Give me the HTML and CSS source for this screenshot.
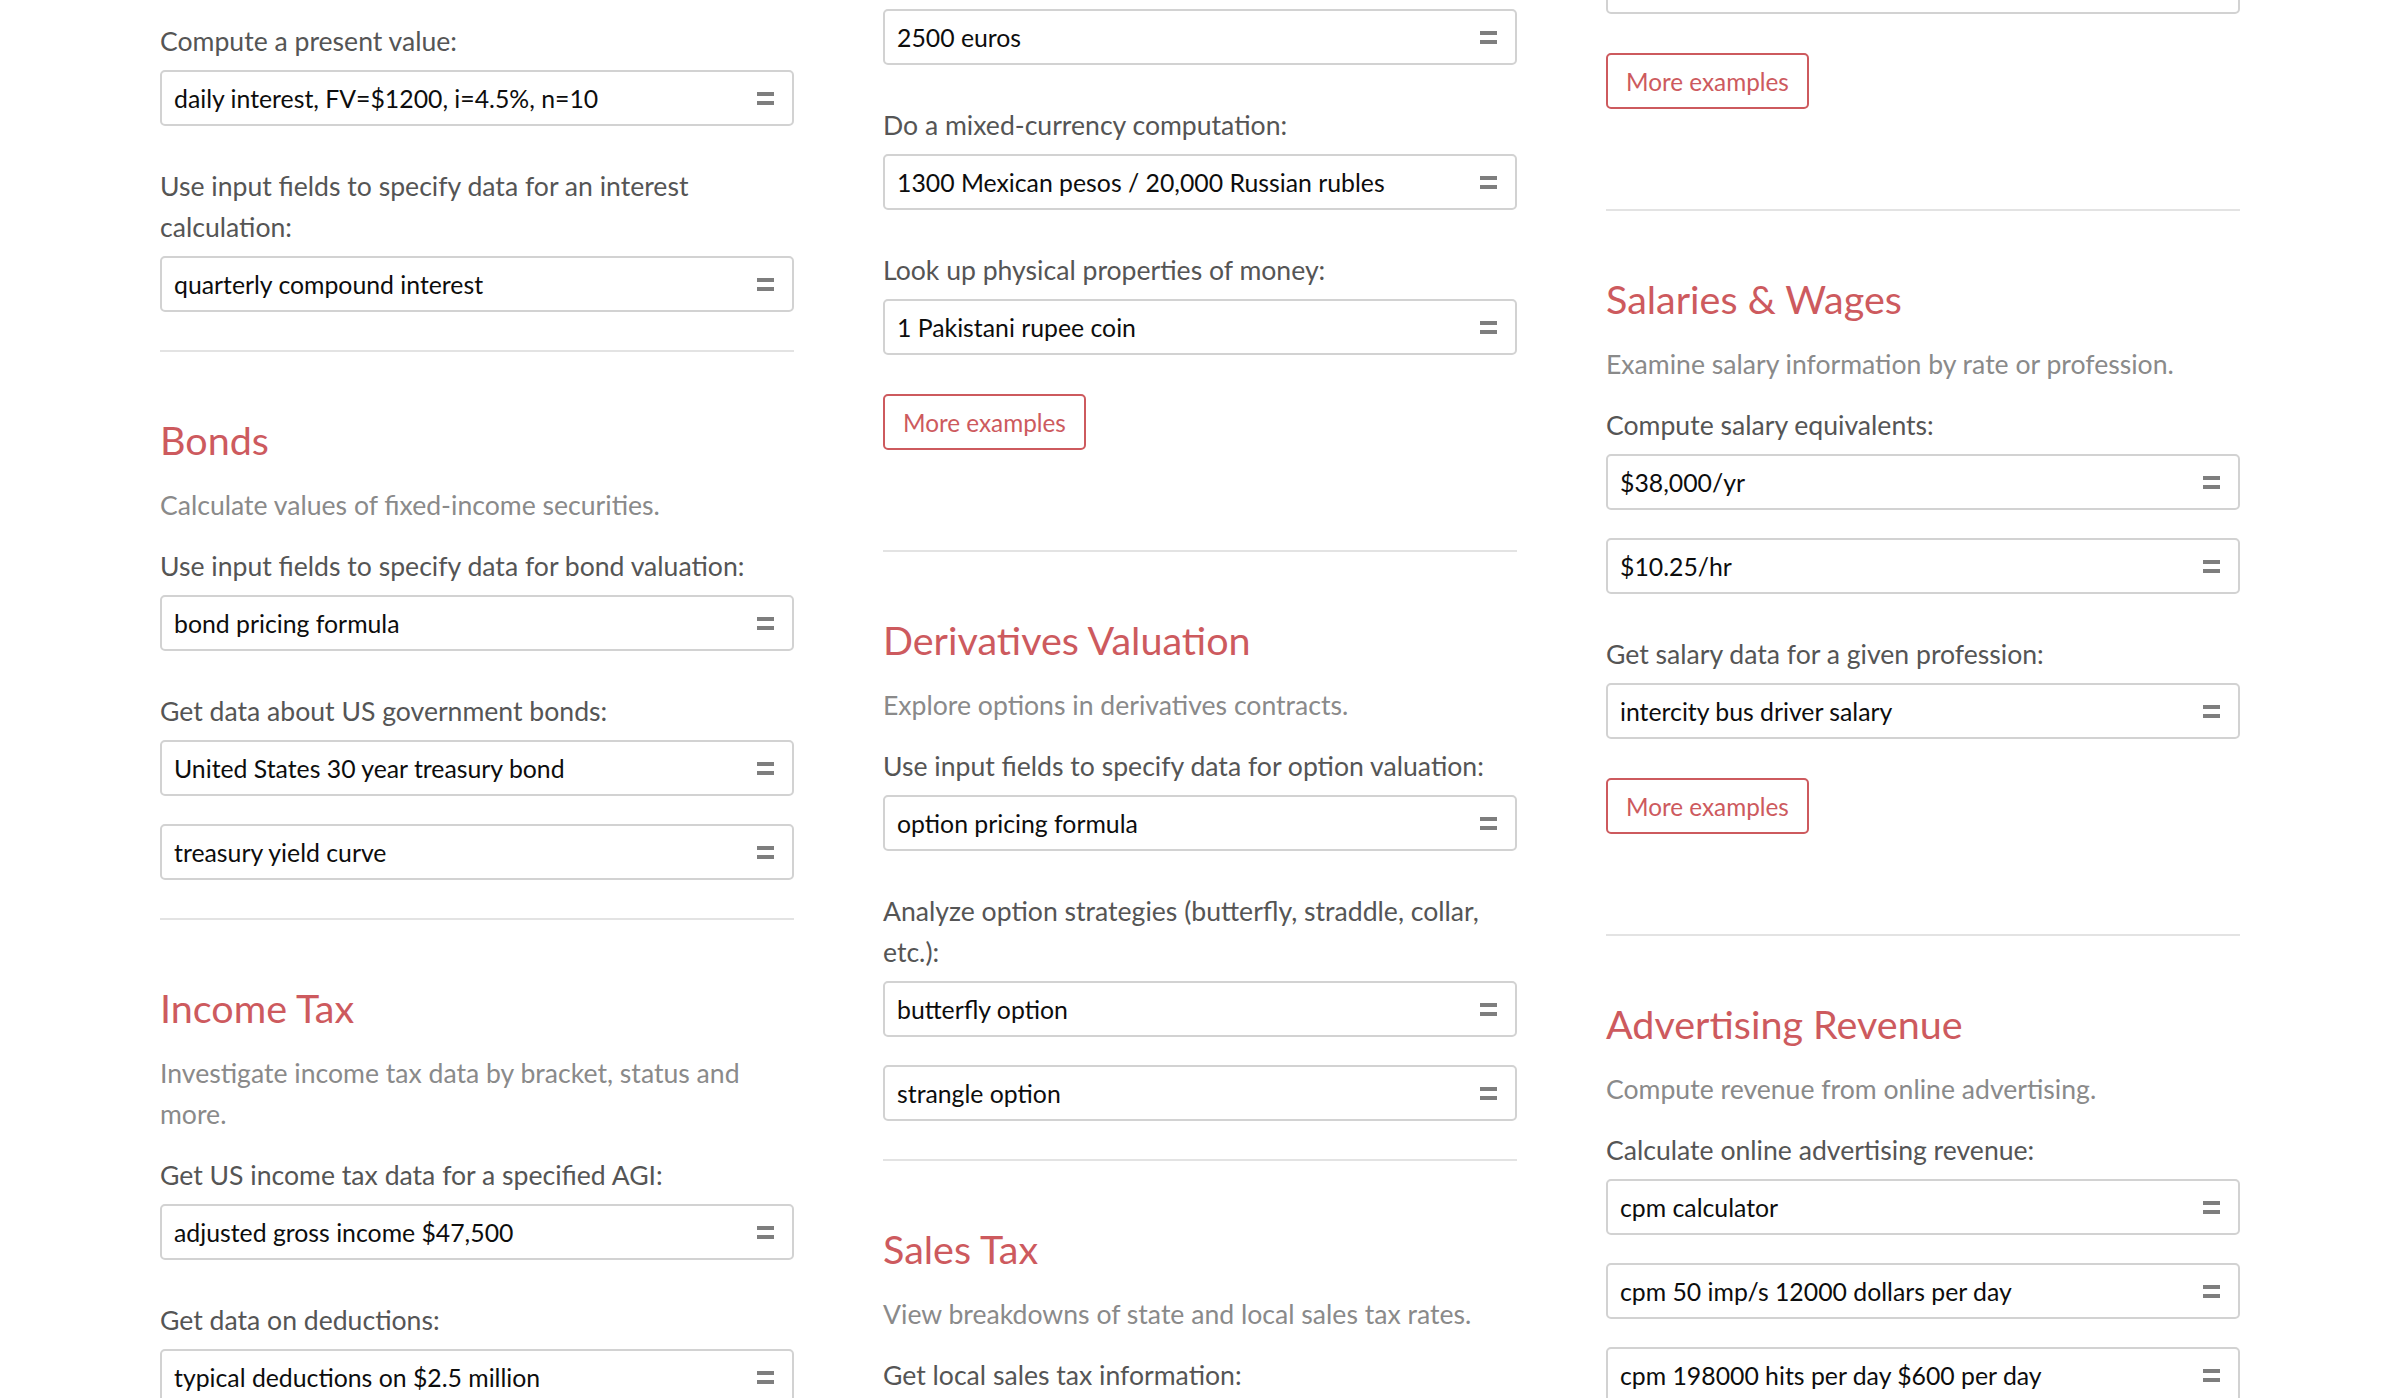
FILE: index.html
```html
<!DOCTYPE html>
<html lang="en">
<head>
<meta charset="utf-8">
<title>Money &amp; Finance examples</title>
<link rel="stylesheet" href="styles.css">
</head>
<body>
<main class="page">
  <div class="col col-left">
    <div class="group first">
      <p class="label">Compute a present value:</p>
      <div class="field"><span>daily interest, FV=$1200, i=4.5%, n=10</span><i class="eq"></i></div>
    </div>
    <div class="group">
      <p class="label">Use input fields to specify data for an interest calculation:</p>
      <div class="field"><span>quarterly compound interest</span><i class="eq"></i></div>
    </div>
    <hr class="divider">
    <section class="topic">
      <h2>Bonds</h2>
      <p class="desc">Calculate values of fixed-income securities.</p>
      <div class="group">
        <p class="label">Use input fields to specify data for bond valuation:</p>
        <div class="field"><span>bond pricing formula</span><i class="eq"></i></div>
      </div>
      <div class="group">
        <p class="label">Get data about US government bonds:</p>
        <div class="field"><span>United States 30 year treasury bond</span><i class="eq"></i></div>
        <div class="field"><span>treasury yield curve</span><i class="eq"></i></div>
      </div>
    </section>
    <hr class="divider">
    <section class="topic">
      <h2>Income Tax</h2>
      <p class="desc">Investigate income tax data by bracket, status and more.</p>
      <div class="group">
        <p class="label">Get US income tax data for a specified AGI:</p>
        <div class="field"><span>adjusted gross income $47,500</span><i class="eq"></i></div>
      </div>
      <div class="group">
        <p class="label">Get data on deductions:</p>
        <div class="field"><span>typical deductions on $2.5 million</span><i class="eq"></i></div>
      </div>
    </section>
  </div>

  <div class="col col-mid">
    <div class="group first">
      <div class="field"><span>2500 euros</span><i class="eq"></i></div>
    </div>
    <div class="group">
      <p class="label">Do a mixed-currency computation:</p>
      <div class="field"><span>1300 Mexican pesos / 20,000 Russian rubles</span><i class="eq"></i></div>
    </div>
    <div class="group">
      <p class="label">Look up physical properties of money:</p>
      <div class="field"><span>1 Pakistani rupee coin</span><i class="eq"></i></div>
    </div>
    <a class="more" href="#">More examples</a>
    <hr class="divider">
    <section class="topic">
      <h2>Derivatives Valuation</h2>
      <p class="desc">Explore options in derivatives contracts.</p>
      <div class="group">
        <p class="label">Use input fields to specify data for option valuation:</p>
        <div class="field"><span>option pricing formula</span><i class="eq"></i></div>
      </div>
      <div class="group">
        <p class="label">Analyze option strategies (butterfly, straddle, collar, etc.):</p>
        <div class="field"><span>butterfly option</span><i class="eq"></i></div>
        <div class="field"><span>strangle option</span><i class="eq"></i></div>
      </div>
    </section>
    <hr class="divider">
    <section class="topic">
      <h2>Sales Tax</h2>
      <p class="desc">View breakdowns of state and local sales tax rates.</p>
      <div class="group">
        <p class="label">Get local sales tax information:</p>
      </div>
    </section>
  </div>

  <div class="col col-right">
    <div class="group first">
      <div class="field"><span>inflation of $5,000 from 1987 to 2017</span><i class="eq"></i></div>
    </div>
    <a class="more" href="#">More examples</a>
    <hr class="divider">
    <section class="topic">
      <h2>Salaries &amp; Wages</h2>
      <p class="desc">Examine salary information by rate or profession.</p>
      <div class="group">
        <p class="label">Compute salary equivalents:</p>
        <div class="field"><span>$38,000/yr</span><i class="eq"></i></div>
        <div class="field"><span>$10.25/hr</span><i class="eq"></i></div>
      </div>
      <div class="group">
        <p class="label">Get salary data for a given profession:</p>
        <div class="field"><span>intercity bus driver salary</span><i class="eq"></i></div>
      </div>
      <a class="more" href="#">More examples</a>
    </section>
    <hr class="divider">
    <section class="topic">
      <h2>Advertising Revenue</h2>
      <p class="desc">Compute revenue from online advertising.</p>
      <div class="group">
        <p class="label">Calculate online advertising revenue:</p>
        <div class="field"><span>cpm calculator</span><i class="eq"></i></div>
        <div class="field"><span>cpm 50 imp/s 12000 dollars per day</span><i class="eq"></i></div>
        <div class="field"><span>cpm 198000 hits per day $600 per day</span><i class="eq"></i></div>
      </div>
    </section>
  </div>
</main>
</body>
</html>
```

FILE: styles.css
```css
html, body {
  margin: 0;
  padding: 0;
  background: #ffffff;
}

body {
  height: 1398px;
  overflow: hidden;
  font-family: Lato, "Open Sans", "Liberation Sans", sans-serif;
  font-size: 26.6px;
  line-height: 41px;
  color: #1b1b1b;
}

.page {
  display: grid;
  grid-template-columns: repeat(3, 634px);
  column-gap: 89px;
  padding: 0 160px 0 160px;
  align-items: start;
}

.col {
  display: flex;
  flex-direction: column;
  align-items: stretch;
}

.group {
  display: flex;
  flex-direction: column;
  gap: 28px;
  margin-top: 40px;
}

.topic > .group:first-of-type {
  margin-top: 0;
}

.col-left > .group.first { margin-top: 21px; }
.col-mid > .group.first { margin-top: 9px; }
.col-right > .group.first { margin-top: -42px; }

.label {
  margin: 0 0 -20px 0;
  color: #555555;
}

.field {
  box-sizing: border-box;
  height: 56px;
  border: 2px solid #d2d2d2;
  border-radius: 5px;
  padding: 0 18px 0 12px;
  display: flex;
  align-items: center;
  justify-content: space-between;
  color: #0d0d0d;
  background: #ffffff;
  font-size: 24.8px;
}

.field span {
  white-space: nowrap;
}

.eq {
  display: block;
  box-sizing: border-box;
  width: 17px;
  height: 13px;
  border-top: 4px solid #7e7e7e;
  border-bottom: 4px solid #7e7e7e;
  flex: none;
}

.divider {
  border: 0;
  height: 2px;
  background: #e3e3e3;
  margin: 38px 0 0 0;
  width: 100%;
}

.topic {
  display: flex;
  flex-direction: column;
}

.topic h2 {
  margin: 64px 0 21px 0;
  font-size: 39.5px;
  line-height: 48px;
  font-weight: 400;
  color: #cd5a5e;
}

.desc {
  margin: 0 0 20px 0;
  color: #8a8a8a;
}

.more {
  align-self: flex-start;
  box-sizing: border-box;
  height: 56px;
  margin: 39px 0 62px 0;
  padding: 0 18px;
  border: 2px solid #cd5a5e;
  border-radius: 5px;
  color: #cd5a5e;
  text-decoration: none;
  display: flex;
  align-items: center;
  font-size: 24.3px;
}
```
